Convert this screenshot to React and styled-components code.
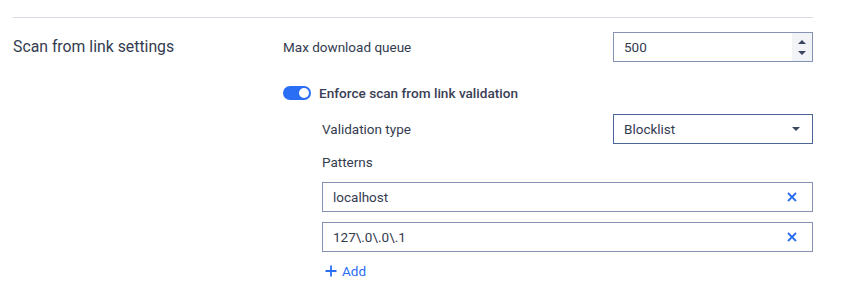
import React, { useState } from 'react';
import styled, { createGlobalStyle } from 'styled-components';

const GlobalStyle = createGlobalStyle`
    body {
        margin: 0;
        background: #ffffff;
        font-family: Roboto, "Noto Sans", sans-serif;
        color: #343b50;
    }
`;

const Page = styled.div`
    padding: 17px 47px 0 13px;
`;

const Divider = styled.div`
    height: 1px;
    background-color: #d9dbe3;
`;

const Section = styled.div`
    display: flex;
    padding-top: 14px;
`;

const SectionTitle = styled.div`
    width: 270px;
    font-size: 15.8px;
    line-height: 30px;
    color: #343b50;
`;

const Body = styled.div`
    flex: 1;
    display: flex;
    flex-direction: column;
`;

const FieldRow = styled.div`
    display: flex;
    align-items: center;
    height: 30px;
`;

const FieldLabel = styled.div`
    width: ${props => props.width}px;
    font-size: 13.5px;
    color: #343b50;
`;

const NumberBox = styled.div`
    display: flex;
    width: 200px;
    height: 30px;
    box-sizing: border-box;
    border: 1px solid #8592b3;
`;

const TextValue = styled.div`
    flex: 1;
    display: flex;
    align-items: center;
    padding-left: 10px;
    font-size: 13.5px;
    color: #343b50;
`;

const Spinner = styled.div`
    width: 20px;
    background-color: #f2f3f7;
    display: flex;
    flex-direction: column;
    align-items: center;
    justify-content: center;
    gap: 7px;
`;

const Arrow = styled.div`
    width: 0;
    height: 0;
    border-left: 4px solid transparent;
    border-right: 4px solid transparent;
    ${props => props.up
        ? 'border-bottom: 4px solid #3a4560;'
        : 'border-top: 4px solid #3a4560;'}
`;

const ToggleRow = styled.label`
    display: flex;
    align-items: center;
    height: 20px;
    margin-top: 21px;
    gap: 8px;
    cursor: pointer;
`;

const Toggle = styled.span`
    position: relative;
    width: 28px;
    height: 14px;
    border-radius: 7px;
    background-color: ${props => props.on ? '#2a6ef6' : '#b7bdcc'};

    &::after {
        content: '';
        position: absolute;
        top: 2px;
        left: ${props => props.on ? '16px' : '2px'};
        width: 10px;
        height: 10px;
        border-radius: 50%;
        background: #ffffff;
    }
`;

const ToggleText = styled.span`
    font-size: 13.6px;
    font-weight: 500;
    color: #3a4055;
`;

const Nested = styled.div`
    display: flex;
    flex-direction: column;
    padding-left: 39px;
    margin-top: 11px;
`;

const SelectBox = styled.div`
    display: flex;
    align-items: center;
    width: 200px;
    height: 30px;
    box-sizing: border-box;
    border: 1px solid #4c6597;
    padding: 0 12px 0 10px;
    font-size: 13.5px;
    color: #343b50;
    justify-content: space-between;
`;

const Caret = styled.div`
    width: 0;
    height: 0;
    border-left: 4px solid transparent;
    border-right: 4px solid transparent;
    border-top: 4px solid #3a4560;
`;

const SubLabel = styled.div`
    margin-top: 10px;
    font-size: 13.5px;
    line-height: 16px;
    color: #343b50;
`;

const PatternList = styled.div`
    display: flex;
    flex-direction: column;
    gap: 10px;
    margin-top: 12px;
`;

const PatternBox = styled.div`
    display: flex;
    align-items: center;
    height: 30px;
    box-sizing: border-box;
    border: 1px solid #8592b3;
    padding: 0 15px 0 10px;
    font-size: 13.5px;
    color: #343b50;
`;

const PatternText = styled.span`
    flex: 1;
`;

const RemoveButton = styled.button`
    border: none;
    background: none;
    padding: 0;
    display: flex;
    cursor: pointer;
`;

const AddButton = styled.button`
    display: flex;
    align-items: center;
    gap: 5px;
    margin-top: 10px;
    padding: 0 0 0 3px;
    height: 18px;
    border: none;
    background: none;
    font-family: inherit;
    font-size: 13.5px;
    color: #2a6ef6;
    cursor: pointer;
    align-self: flex-start;
`;

const CrossIcon = () => (
    <svg width="10" height="10" viewBox="0 0 10 10">
        <path d="M1 1L9 9M9 1L1 9" stroke="#2a6ef6" strokeWidth="1.8" />
    </svg>
);

const PlusIcon = () => (
    <svg width="12" height="12" viewBox="0 0 12 12">
        <path d="M6 0.5V11.5M0.5 6H11.5" stroke="#2a6ef6" strokeWidth="1.8" />
    </svg>
);

export default function App() {
    const [enforce, setEnforce] = useState(true);
    const [patterns, setPatterns] = useState(['localhost', '127\\.0\\.0\\.1']);

    return (
        <Page>
            <GlobalStyle />
            <Divider />
            <Section>
                <SectionTitle>Scan from link settings</SectionTitle>
                <Body>
                    <FieldRow>
                        <FieldLabel width={330}>Max download queue</FieldLabel>
                        <NumberBox>
                            <TextValue>500</TextValue>
                            <Spinner>
                                <Arrow up />
                                <Arrow />
                            </Spinner>
                        </NumberBox>
                    </FieldRow>
                    <ToggleRow onClick={() => setEnforce(!enforce)}>
                        <Toggle on={enforce} />
                        <ToggleText>Enforce scan from link validation</ToggleText>
                    </ToggleRow>
                    <Nested>
                        <FieldRow>
                            <FieldLabel width={291}>Validation type</FieldLabel>
                            <SelectBox>
                                Blocklist
                                <Caret />
                            </SelectBox>
                        </FieldRow>
                        <SubLabel>Patterns</SubLabel>
                        <PatternList>
                            {patterns.map((p, i) => (
                                <PatternBox key={i}>
                                    <PatternText>{p}</PatternText>
                                    <RemoveButton onClick={() => setPatterns(patterns.filter((_, j) => j !== i))}>
                                        <CrossIcon />
                                    </RemoveButton>
                                </PatternBox>
                            ))}
                        </PatternList>
                        <AddButton onClick={() => setPatterns([...patterns, ''])}>
                            <PlusIcon />
                            Add
                        </AddButton>
                    </Nested>
                </Body>
            </Section>
        </Page>
    );
}
